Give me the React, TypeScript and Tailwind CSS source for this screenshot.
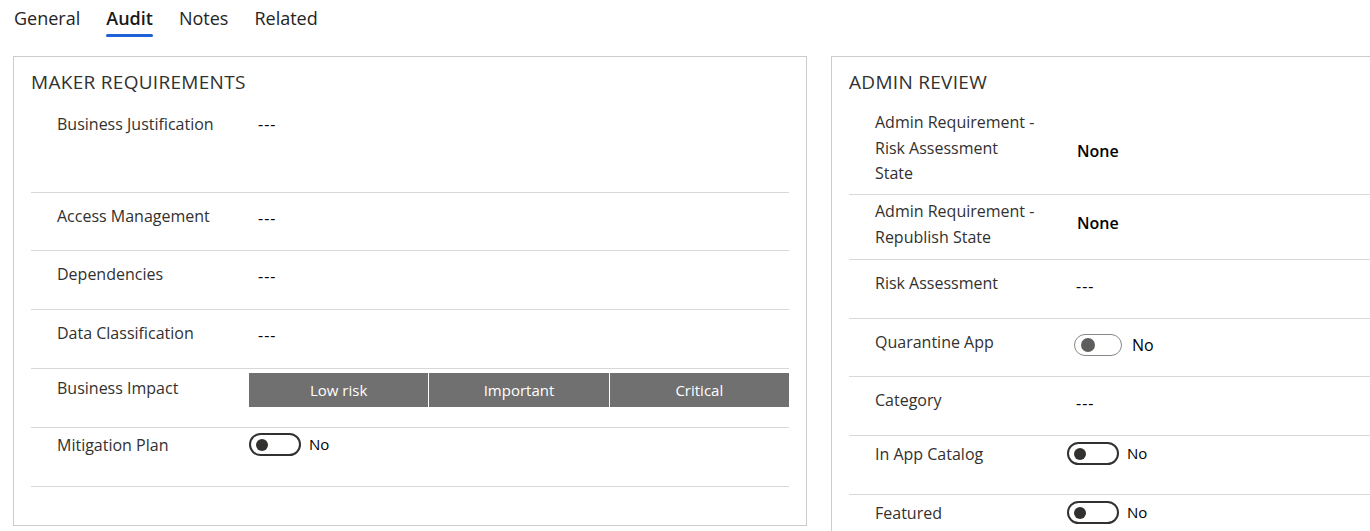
import React from 'react';

const font = { fontFamily: '"Open Sans", "Noto Sans", Arial, sans-serif' };

const Toggle: React.FC<{ muted?: boolean }> = ({ muted }) =>
  muted ? (
    <span className="flex h-[22px] w-[48px] items-center rounded-full border border-[#8a8886] bg-white pl-[6px]">
      <span className="h-[14px] w-[14px] rounded-full bg-[#605e5c]" />
    </span>
  ) : (
    <span className="flex h-[23px] w-[52px] items-center rounded-full border-2 border-[#323130] bg-white pl-[5px]">
      <span className="h-[12px] w-[12px] rounded-full bg-[#323130]" />
    </span>
  );

const Dash = () => <span className="pl-[9px] text-[16px] tracking-[1px] text-black">---</span>;

const App: React.FC = () => {
  const tabs = ['General', 'Audit', 'Notes', 'Related'];

  return (
    <div className="h-[531px] w-[1370px] overflow-hidden bg-white" style={font}>
      {/* tabs */}
      <div className="flex h-[56px] gap-[26px] pl-[14px]">
        {tabs.map((t) => (
          <div key={t} className="flex flex-col">
            <span
              className={`pt-[5px] text-[18px] leading-[26px] ${
                t === 'Audit' ? 'font-semibold text-[#1b1a19]' : 'text-[#242424]'
              }`}
            >
              {t}
            </span>
            {t === 'Audit' && <span className="mt-[3px] h-[3px] rounded-full bg-[#1f62d8]" />}
          </div>
        ))}
      </div>

      <div className="flex items-start gap-[24px] pl-[13px]">
        {/* maker requirements */}
        <section className="w-[794px] shrink-0 border border-[#cccccc] px-[17px] pb-[38px] text-[16px]">
          <h2 className="h-[44px] pt-[13px] text-[19px] leading-[24px] tracking-[0.3px] text-[#323130]">
            MAKER REQUIREMENTS
          </h2>

          <div className="flex h-[92px] border-b border-[#d8d8d8] pt-[12px] leading-[22px]">
            <div className="w-[218px] pl-[26px] text-[#323130]">Business Justification</div>
            <Dash />
          </div>

          <div className="flex h-[58px] border-b border-[#d8d8d8] pt-[12px] leading-[22px]">
            <div className="w-[218px] pl-[26px] text-[#323130]">Access Management</div>
            <div className="pt-[2px]">
              <Dash />
            </div>
          </div>

          {['Dependencies', 'Data Classification'].map((l) => (
            <div key={l} className="flex h-[59px] border-b border-[#d8d8d8] pt-[12px] leading-[22px]">
              <div className="w-[218px] pl-[26px] text-[#323130]">{l}</div>
              <div className="pt-[2px]">
                <Dash />
              </div>
            </div>
          ))}

          <div className="flex h-[59px] border-b border-[#d8d8d8] pt-[4px] leading-[22px]">
            <div className="w-[218px] pl-[26px] pt-[4px] text-[#323130]">Business Impact</div>
            <div className="grid h-[34px] flex-1 grid-cols-3 gap-px bg-white text-[15px]">
              {['Low risk', 'Important', 'Critical'].map((b) => (
                <div key={b} className="flex items-center justify-center bg-[#707070] text-white">
                  {b}
                </div>
              ))}
            </div>
          </div>

          <div className="flex h-[59px] border-b border-[#d8d8d8] pt-[5px] leading-[22px]">
            <div className="w-[218px] pl-[26px] pt-px text-[#323130]">Mitigation Plan</div>
            <div className="flex items-start gap-[8px]">
              <Toggle />
              <span className="text-[15px] text-black">No</span>
            </div>
          </div>
        </section>

        {/* admin review */}
        <section className="w-[794px] shrink-0 border border-[#cccccc] px-[17px] pb-[40px] text-[16px]">
          <h2 className="h-[44px] pt-[13px] text-[19px] leading-[24px] tracking-[0.3px] text-[#323130]">
            ADMIN REVIEW
          </h2>

          <div className="flex h-[94px] border-b border-[#d8d8d8] pt-[9px] leading-[25.5px]">
            <div className="w-[218px] pl-[26px] text-[#323130]">
              Admin Requirement -<br />
              Risk Assessment
              <br />
              State
            </div>
            <div className="pl-[10px] pt-[29px] font-semibold text-black">None</div>
          </div>

          <div className="flex h-[65px] border-b border-[#d8d8d8] pt-[4px] leading-[25.5px]">
            <div className="w-[218px] pl-[26px] text-[#323130]">
              Admin Requirement -<br />
              Republish State
            </div>
            <div className="pl-[10px] pt-[12px] font-semibold text-black">None</div>
          </div>

          <div className="flex h-[59px] border-b border-[#d8d8d8] pt-[12px] leading-[22px]">
            <div className="w-[218px] pl-[26px] text-[#323130]">Risk Assessment</div>
            <div className="pt-[3px]">
              <Dash />
            </div>
          </div>

          <div className="flex h-[58px] border-b border-[#d8d8d8] pt-[12px] leading-[22px]">
            <div className="w-[218px] pl-[26px] text-[#323130]">Quarantine App</div>
            <div className="flex items-start gap-[10px] pl-[7px] pt-[3px]">
              <Toggle muted />
              <span className="text-black">No</span>
            </div>
          </div>

          <div className="flex h-[59px] border-b border-[#d8d8d8] pt-[12px] leading-[22px]">
            <div className="w-[218px] pl-[26px] text-[#323130]">Category</div>
            <div className="pt-[3px]">
              <Dash />
            </div>
          </div>

          <div className="flex h-[59px] border-b border-[#d8d8d8] pt-[6px] leading-[22px]">
            <div className="w-[218px] pl-[26px] pt-[1px] text-[#323130]">In App Catalog</div>
            <div className="flex items-start gap-[8px]">
              <Toggle />
              <span className="text-[15px] text-black">No</span>
            </div>
          </div>

          <div className="flex h-[58px] pt-[6px] leading-[22px]">
            <div className="w-[218px] pl-[26px] pt-[1px] text-[#323130]">Featured</div>
            <div className="flex items-start gap-[8px]">
              <Toggle />
              <span className="text-[15px] text-black">No</span>
            </div>
          </div>
        </section>
      </div>
    </div>
  );
};

export default App;
